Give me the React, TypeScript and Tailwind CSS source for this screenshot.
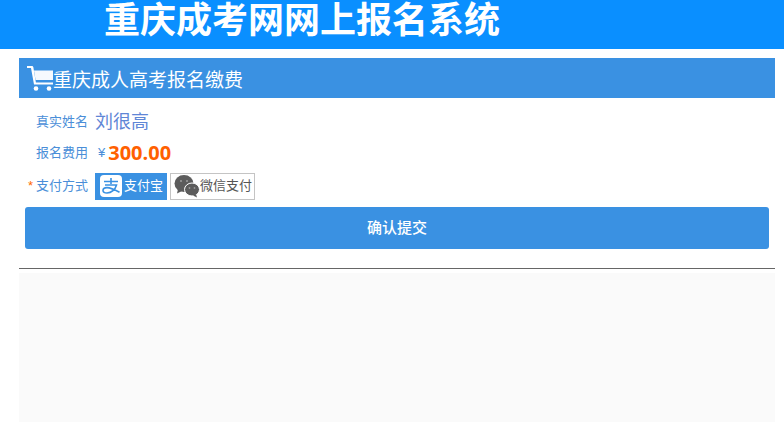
const cjk = "font-['Liberation_Sans','Noto_Sans_CJK_SC',sans-serif]";

function CartIcon() {
  return (
    <svg width="26" height="26" viewBox="0 0 26 26" className="shrink-0">
      <path d="M0 1h5.5l.8 1 2.6 15.500H26v2H7L4 3H0z" fill="#fff" />
      <path d="M7 5.500h19v9.500H8.600z" fill="#fff" opacity="0.95" />
      <circle cx="9" cy="23.500" r="2.300" fill="#fff" />
      <circle cx="22" cy="23.500" r="2.300" fill="#fff" />
    </svg>
  );
}

function AlipayIcon() {
  return (
    <svg width="22" height="22" viewBox="0 0 22 22" className="shrink-0">
      <rect width="22" height="22" rx="4" fill="#fff" />
      <path d="M4 6.500h14M11 3v6M5 10h11.500c-1.200 4.500-5 8-9.500 8-2.600 0-4-1-4-2.600 0-1.800 1.800-2.800 4-2.800 3.500 0 8.500 2.400 12.500 4.600" fill="none" stroke="#3a91e2" strokeWidth="1.6" />
    </svg>
  );
}

function WechatIcon() {
  return (
    <svg width="26" height="24" viewBox="0 0 26 24" className="shrink-0">
      <ellipse cx="10" cy="9.500" rx="9.500" ry="8.500" fill="#5c5c5c" />
      <path d="M4 15l-1 4.500 5-2.500z" fill="#5c5c5c" />
      <ellipse cx="18" cy="15.500" rx="7.500" ry="6.500" fill="#5c5c5c" stroke="#fff" strokeWidth="1" />
      <path d="M22 20l1 3.500-4-2z" fill="#5c5c5c" />
      <circle cx="7" cy="7" r="1.100" fill="#999" />
      <circle cx="13" cy="7" r="1.100" fill="#999" />
      <circle cx="15.500" cy="14" r="0.900" fill="#999" />
      <circle cx="20.500" cy="14" r="0.900" fill="#999" />
    </svg>
  );
}

export default function App() {
  return (
    <div className={`${cjk} h-[422px] w-[784px] overflow-hidden bg-white`}>
      <header className="h-[49px] bg-[#0a8fff] pl-[104px] text-[36px] leading-[41px] font-bold text-white">
        重庆成考网网上报名系统
      </header>

      <main className="mx-[19px] mt-[9px] w-[756px]">
        <div className="flex h-10 items-center bg-[#3a91e2] pl-[8px] text-[19px] text-white">
          <CartIcon />
          <span className="mt-[5px] leading-[23px]">重庆成人高考报名缴费</span>
        </div>

        <div className="flex h-[48px] items-center">
          <span className="w-[69px] text-right text-[13px] text-[#4a8ed8]">真实姓名</span>
          <span className="ml-[7px] text-[18px] text-[#5f86d6]">刘很高</span>
        </div>

        <div className="flex h-[14px] items-center">
          <span className="w-[69px] text-right text-[13px] text-[#4a8ed8]">报名费用</span>
          <span className="ml-[10px] text-[13px] text-[#4a8ed8]">¥</span>
          <span className="ml-[3px] font-['Open_Sans',sans-serif] text-[20px] font-bold text-[#ff6000]">300.00</span>
        </div>

        <div className="mt-[12px] flex h-[28px] items-center">
          <span className="flex w-[69px] items-center justify-end text-[13px] text-[#4a8ed8]">
            <span className="mr-[3px] text-[#ff6a00]">*</span>支付方式
          </span>
          <div className="ml-[7px] flex h-[27px] w-[72px] items-center gap-[2px] bg-[#3a91e2] pl-[5px] text-[13px] text-white">
            <AlipayIcon />
            <span>支付宝</span>
          </div>
          <div className="ml-[3px] flex h-[27px] w-[85px] items-center border border-[#c4c4c4] pl-[3px] text-[13px] text-[#555]">
            <WechatIcon />
            <span>微信支付</span>
          </div>
        </div>

        <button className="mt-[7px] ml-[6px] flex h-[42px] w-[744px] items-center justify-center rounded-[3px] bg-[#3a91e2] text-[15px] font-medium text-white">
          确认提交
        </button>

        <hr className="mt-[19px] border-t border-[#666]" />

        <div className="mt-[4px] h-[150px] bg-[#fafafa]" />
      </main>
    </div>
  );
}
